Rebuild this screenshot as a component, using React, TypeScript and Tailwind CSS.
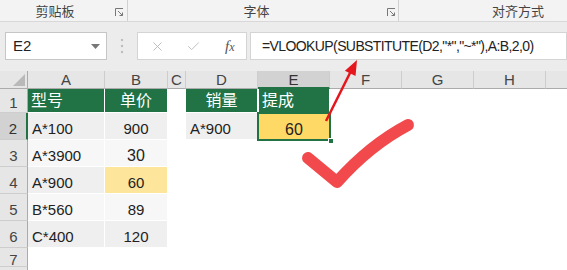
import React from 'react';
import { X, Check } from 'lucide-react';

// column header letters, widths come from the grid template; the last column is off-screen
const letters = ['A', 'B', 'C', 'D', 'E', 'F', 'G', 'H', ''];

const colHead = 'flex items-center justify-center pt-[2px] bg-[#e6e6e6] border-r border-b border-r-[#cdcdcd] border-b-[#ababab] text-[15px] text-[#444]';
const colHeadSel = 'flex items-center justify-center pt-[2px] bg-[#d2d2d2] border-r border-b-2 border-r-[#cdcdcd] border-b-[#217346] text-[15px] text-[#333]';
const rowHead = 'flex items-center justify-center pt-[6px] bg-[#e6e6e6] border-r border-b border-r-[#ababab] border-b-[#cdcdcd] text-[15px] text-[#444]';
const rowHeadSel = 'flex items-center justify-center pt-[6px] bg-[#d2d2d2] border-r-2 border-b border-r-[#217346] border-b-[#cdcdcd] text-[15px] text-[#333]';
const green = 'flex items-center bg-[#217346] text-white text-[16px] border-r border-b border-white';
const dark = 'flex items-center pt-[6px] bg-[#efefef] border-r border-b border-white text-[15px] text-[#222]';
const light = 'flex items-center pt-[6px] bg-[#f7f7f7] border-r border-b border-white text-[15px] text-[#222]';

const data = [
  ['A*100', '900'],
  ['A*3900', '30'],
  ['A*900', '60'],
  ['B*560', '89'],
  ['C*400', '120'],
];

function Launcher() {
  return (
    <svg width="9" height="9" viewBox="0 0 9 9" fill="none" stroke="#777" strokeWidth="1">
      <path d="M0.5 8V0.5H8" />
      <path d="M3 3L7.5 7.5M7.5 4.5V7.5H4.5" />
    </svg>
  );
}

export default function App() {
  return (
    <div className="relative w-[567px] h-[270px] overflow-hidden bg-white font-['Liberation_Sans','Noto_Sans_CJK_SC',sans-serif]">
      {/* ribbon group names */}
      <div className="h-[22px] flex bg-[#f3f3f3] border-b border-[#d8d8d8] text-[13px] text-[#444] font-['Noto_Sans_CJK_SC',sans-serif]">
        <div className="w-[128px] flex items-center border-r border-[#d0d0d0]">
          <span className="w-[110px] text-center">剪贴板</span>
          <span className="ml-[5px] mt-[3px]"><Launcher /></span>
        </div>
        <div className="w-[271px] flex items-center border-r border-[#d0d0d0]">
          <span className="w-[257px] text-center">字体</span>
          <span className="ml-[2px] mt-[3px]"><Launcher /></span>
        </div>
        <div className="flex-1 flex items-center pl-[93px]">对齐方式</div>
      </div>

      {/* formula bar */}
      <div className="h-[49px] flex items-start pt-[10px] bg-[#ececec]">
        <div className="ml-[5px] w-[102px] h-[28px] bg-white border border-[#c6c6c6] flex items-center justify-between pl-[7px] pr-[6px] text-[15px] text-[#222]">
          <span>E2</span>
          <svg width="9" height="5" viewBox="0 0 9 5"><path d="M0 0H9L4.5 5Z" fill="#777" /></svg>
        </div>
        <svg className="ml-[13px] mt-[6px]" width="4" height="16" viewBox="0 0 4 16" fill="#bdbdbd">
          <circle cx="2" cy="2" r="1.2" />
          <circle cx="2" cy="8" r="1.2" />
          <circle cx="2" cy="14" r="1.2" />
        </svg>
        <div className="ml-[13px] w-[110px] h-[28px] bg-white border border-[#d4d4d4] flex items-center">
          <X className="ml-[12px]" size={15} color="#bbbbbb" strokeWidth={1.5} />
          <Check className="ml-[21px]" size={15} color="#bbbbbb" strokeWidth={1.5} />
          <span className="ml-[24px] italic text-[15px] text-[#555] font-['Liberation_Serif',serif]">f<span className="text-[12px]">x</span></span>
        </div>
        <div className="ml-[3px] flex-1 h-[28px] bg-white border border-[#d4d4d4] flex items-center pl-[11px] text-[14px] tracking-[-0.6px] text-[#222] whitespace-nowrap">
          =VLOOKUP(SUBSTITUTE(D2,"*","~*"),A:B,2,0)
        </div>
      </div>

      {/* sheet */}
      <div className="grid grid-cols-[28px_77px_63px_18px_72px_72px_72px_72px_72px_72px] grid-rows-[18px_24px_27px_27px_27px_27px_27px_19px_27px]">
        <div className="relative bg-[#e6e6e6] border-r border-b border-r-[#ababab] border-b-[#ababab]">
          <svg className="absolute right-[2px] bottom-[2px]" width="12" height="12" viewBox="0 0 12 12">
            <path d="M12 0V12H0Z" fill="#b9b9b9" />
          </svg>
        </div>
        {letters.map((l, i) => (
          <div key={i} className={l === 'E' ? colHeadSel : colHead}>{l}</div>
        ))}

        {/* row 1 */}
        <div className={rowHead}>1</div>
        <div className={`${green} pl-[3px]`}>型号</div>
        <div className={`${green} justify-center`}>单价</div>
        <div />
        <div className={`${green} justify-center`}>销量</div>
        <div className={`${green} pl-[3px] border-l border-l-white`}>提成</div>
        <div /><div /><div /><div />

        {/* row 2 */}
        <div className={rowHeadSel}>2</div>
        <div className={`${dark} pl-[4px]`}>A*100</div>
        <div className={`${dark} justify-center`}>900</div>
        <div />
        <div className={`${dark} pl-[4px]`}>A*900</div>
        <div className="relative flex items-center justify-center pt-[6px] bg-[#ffd966] text-[16px] text-[#222]">
          60
          <div className="absolute -left-px -top-px -right-px -bottom-px border-2 border-[#217346]" />
          <div className="absolute -right-[4px] -bottom-[4px] w-[6px] h-[6px] bg-[#217346] border border-white" />
        </div>
        <div /><div /><div /><div />

        {/* rows 3-6 */}
        {data.slice(1).map(([a, b], i) => (
          <React.Fragment key={a}>
            <div className={rowHead}>{i + 3}</div>
            <div className={`${i % 2 === 0 ? light : dark} pl-[4px]`}>{a}</div>
            {i === 1 ? (
              <div className={`${dark} justify-center bg-[#fde59c]`}>{b}</div>
            ) : (
              <div className={`${i % 2 === 0 ? light : dark} justify-center ${i === 0 ? 'text-[16px]' : ''}`}>{b}</div>
            )}
            <div /><div /><div /><div /><div /><div /><div />
          </React.Fragment>
        ))}

        {/* row 7, and the top edge of row 8 */}
        <div className={`${rowHead} pt-[2px]`}>7</div>
        <div /><div /><div /><div /><div /><div /><div /><div /><div />
        <div className={rowHead} />
      </div>

      {/* annotations drawn over the sheet */}
      <svg className="absolute left-0 top-0 pointer-events-none" width="567" height="270" viewBox="0 0 567 270">
        <path d="M326 121L352 69" stroke="#e5161c" strokeWidth="2.5" fill="none" />
        <path d="M357 60L355.5 76.1L344.9 70.7Z" fill="#e5161c" />
        <path d="M308 158L337 182Q370 145 408 125" stroke="#f24a4c" strokeWidth="12" strokeLinecap="round" strokeLinejoin="round" fill="none" />
      </svg>
    </div>
  );
}
